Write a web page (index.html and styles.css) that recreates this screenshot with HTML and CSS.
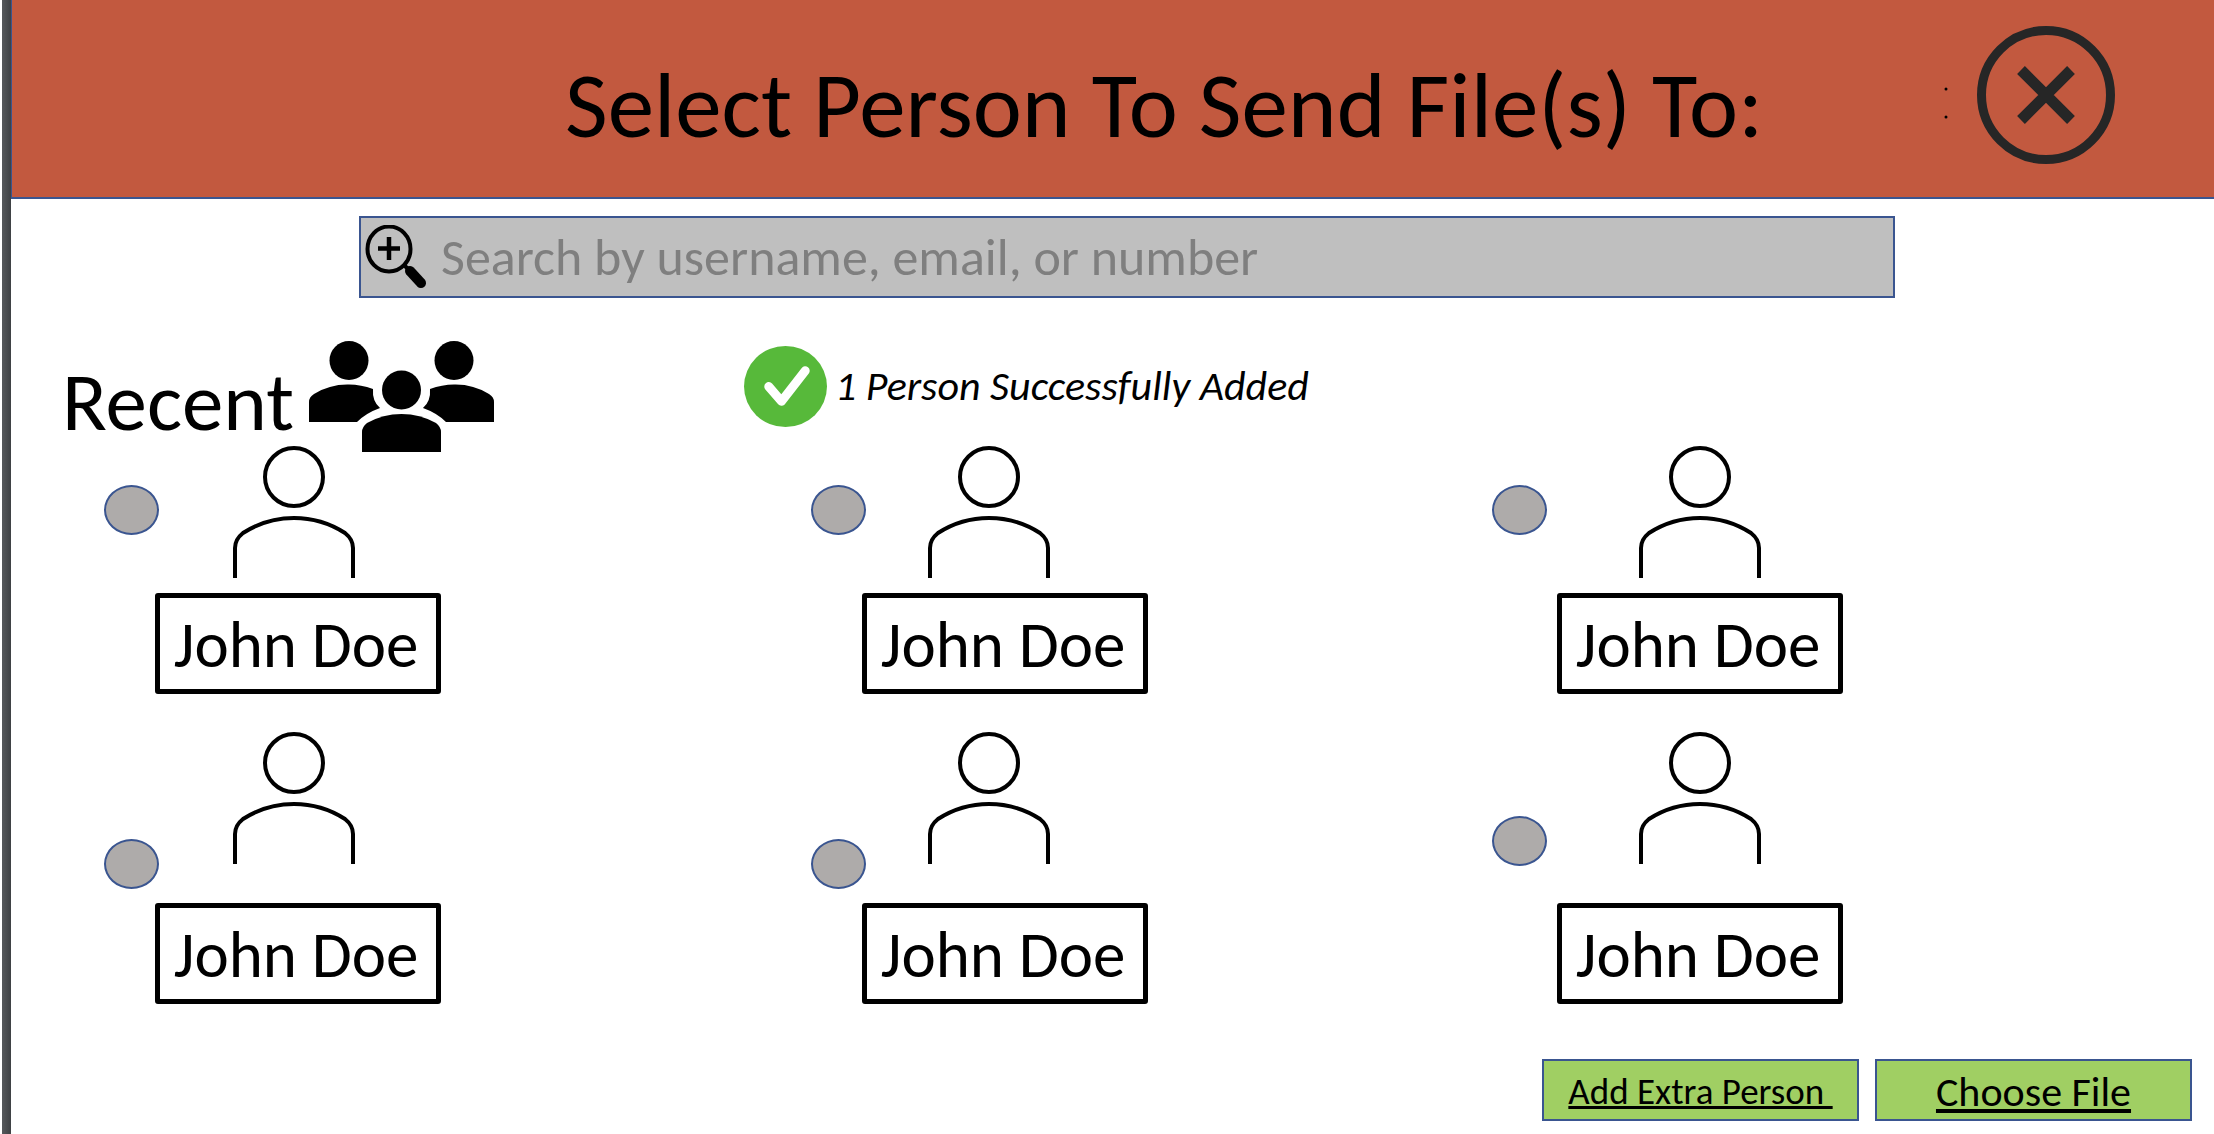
FILE: index.html
```html
<!DOCTYPE html>
<html lang="en">
<head>
<meta charset="utf-8">
<title>Select Person</title>
<link rel="stylesheet" href="styles.css">
</head>
<body>
<svg class="sprite" aria-hidden="true">
  <symbol id="person" viewBox="0 0 122 132">
    <g fill="none" stroke="#000" stroke-width="4">
      <ellipse cx="61" cy="31" rx="29" ry="29"/>
      <path d="M2 132V102C2 95 5 91 10 87C24 78 42 72 61 72S98 78 112 87C117 91 120 95 120 102V132"/>
    </g>
  </symbol>
</svg>
<div class="page">
  <header class="banner">
    <h1 class="title">Select Person To Send File(s) To:</h1>
    <svg class="dots" viewBox="0 0 4 32" aria-hidden="true"><circle cx="2" cy="2" r="1.5"/><circle cx="2" cy="30" r="1.5"/></svg>
    <button class="close" type="button" aria-label="Close">
      <svg viewBox="0 0 138 138" fill="none" stroke="#262626" stroke-width="9"><circle cx="69" cy="69" r="64.500"/><path stroke-width="11" d="M44 44L94 94M94 44L44 94"/></svg>
    </button>
  </header>
  <main>
    <label class="search">
      <svg class="search-icon" viewBox="0 0 62 64" aria-hidden="true">
        <ellipse cx="24" cy="24" rx="21.500" ry="22.500" fill="none" stroke="#000" stroke-width="4"/>
        <path d="M24 12V35M13 23.500H35" stroke="#000" stroke-width="4.500"/>
        <path d="M38 39L44 45" stroke="#000" stroke-width="4"/>
        <path d="M45 46L56 58" stroke="#000" stroke-width="10" stroke-linecap="round"/>
      </svg>
      <input class="search-input" type="text" placeholder="Search by username, email, or number" aria-label="Search by username, email, or number">
    </label>
    <div class="status">
      <h2 class="recent">Recent</h2>
      <svg class="group" viewBox="0 0 185 111" aria-hidden="true">
        <circle cx="40" cy="19.500" r="19.500"/><circle cx="145" cy="19.500" r="19.500"/>
        <path d="M0 81V61Q0 56 5 53Q21 43 40 43.500Q52 43.500 64 48Q63 60 71 67Q57 72 48 81Z"/>
        <path d="M185 81V61Q185 56 180 53Q164 43 145 43.500Q133 43.500 121 48Q122 60 114 67Q128 72 137 81Z"/>
        <circle cx="92.500" cy="49" r="19.500"/>
        <path d="M53 111V91Q53 86 58 82Q74 73 92.500 73T127 82Q132 86 132 91V111Z"/>
      </svg>
      <svg class="check" viewBox="0 0 84 82" aria-hidden="true"><ellipse cx="42" cy="41" rx="42" ry="41" fill="#57b93a"/><path d="M25 41L38 56L62 25" fill="none" stroke="#fff" stroke-width="9" stroke-linecap="round" stroke-linejoin="round"/></svg>
      <p class="message">1 Person Successfully Added</p>
    </div>
    <div class="people">
      <div class="card"><div class="top"><input class="pick" type="radio" name="person" id="p1"><svg class="portrait"><use href="#person"/></svg></div><label class="name" for="p1">John Doe</label></div>
      <div class="card"><div class="top"><input class="pick" type="radio" name="person" id="p2"><svg class="portrait"><use href="#person"/></svg></div><label class="name" for="p2">John Doe</label></div>
      <div class="card"><div class="top"><input class="pick" type="radio" name="person" id="p3"><svg class="portrait"><use href="#person"/></svg></div><label class="name" for="p3">John Doe</label></div>
      <div class="card lower"><div class="top"><input class="pick" type="radio" name="person" id="p4"><svg class="portrait"><use href="#person"/></svg></div><label class="name" for="p4">John Doe</label></div>
      <div class="card lower"><div class="top"><input class="pick" type="radio" name="person" id="p5"><svg class="portrait"><use href="#person"/></svg></div><label class="name" for="p5">John Doe</label></div>
      <div class="card lower"><div class="top"><input class="pick" type="radio" name="person" id="p6"><svg class="portrait"><use href="#person"/></svg></div><label class="name" for="p6">John Doe</label></div>
    </div>
  </main>
  <footer class="actions">
    <button class="action add" type="button">Add Extra Person&nbsp;</button>
    <button class="action choose" type="button">Choose File</button>
  </footer>
</div>
</body>
</html>
```
FILE: styles.css
```css
* { box-sizing: border-box; }
body {
  margin: 0;
  background: #fff;
  color: #000;
  font-family: Calibri, Carlito, Lato, sans-serif;
}
h1, h2, p { margin: 0; font-weight: 400; }
.sprite { position: absolute; width: 0; height: 0; }
svg { display: block; flex: none; }
.page {
  position: relative;
  min-height: 100vh;
  padding-left: 11px;
}
.page::before {
  content: "";
  position: absolute;
  left: 2px;
  top: 0;
  bottom: 0;
  width: 9px;
  background: linear-gradient(90deg, #56595c, #3e4144);
}
.banner {
  display: flex;
  align-items: center;
  height: 199px;
  padding: 0 99px 8px 372px;
  background: #c2593f;
  border-left: 1px solid #3a5590;
  border-bottom: 2px solid #3a5590;
}
.title {
  flex: 1;
  padding-top: 20px;
  font-size: 93px;
  line-height: 112px;
  text-align: center;
  white-space: nowrap;
}
.dots { width: 4px; height: 32px; margin: 16px 29px 0 0; }
.close {
  width: 138px;
  height: 138px;
  padding: 0;
  border: 0;
  background: none;
}
.search {
  display: flex;
  align-items: center;
  height: 82px;
  margin: 17px 319px 0 348px;
  padding-left: 4px;
  background: #bfbfbf;
  border: 2px solid #3a5590;
}
.search-icon { width: 62px; height: 64px; }
.search-input {
  flex: 1;
  min-width: 0;
  margin-left: 14px;
  padding: 0;
  border: 0;
  outline: 0;
  background: none;
  font: 52px/60px Calibri, Carlito, Lato, sans-serif;
}
.search-input::placeholder { color: #7f7f7f; opacity: 1; }
.status {
  display: flex;
  align-items: flex-start;
  margin: 43px 0 -6px;
  padding-left: 51px;
}
.recent {
  width: 247px;
  padding-top: 11px;
  font-size: 83px;
  line-height: 100px;
  white-space: nowrap;
}
.group { width: 185px; height: 111px; }
.check { width: 83px; height: 81px; margin: 5px 8px 0 250px; }
.message {
  padding-top: 20px;
  font-size: 42px;
  font-style: italic;
  line-height: 50px;
  white-space: nowrap;
}
.people {
  display: grid;
  grid-template-columns: 707fr 681fr 722fr;
  row-gap: 38px;
  padding-left: 93px;
}
.top { display: flex; align-items: flex-start; height: 147px; }
.pick {
  appearance: none;
  width: 55px;
  height: 50px;
  margin: 39px 74px 0 0;
  border: 2px solid #3a5590;
  border-radius: 50%;
  background: #aeabaa;
}
.portrait { width: 122px; height: 132px; }
.name {
  display: flex;
  align-items: center;
  justify-content: center;
  width: 286px;
  height: 101px;
  margin-left: 51px;
  padding: 2px 4px 0 0;
  border: 5px solid #000;
  border-radius: 3px;
  font-size: 65px;
  line-height: 78px;
  white-space: nowrap;
}
.card:nth-child(3n+2) .pick { margin-right: 62px; }
.card:nth-child(3n) .pick { margin-right: 92px; }
.card:nth-child(3n) .name { margin-left: 65px; }
.lower .top { height: 171px; }
.lower .pick { margin-top: 107px; }
.lower:last-child .pick { margin-top: 84px; }
.actions {
  display: flex;
  justify-content: flex-end;
  gap: 16px;
  padding: 55px 22px 10px 0;
}
.action {
  width: 317px;
  height: 62px;
  padding: 2px 0 0;
  border: 2px solid #3a5590;
  background: #a0cf63;
  color: #000;
  font-family: inherit;
  text-decoration: underline;
}
.add { font-size: 37px; }
.choose { font-size: 42px; }
```
